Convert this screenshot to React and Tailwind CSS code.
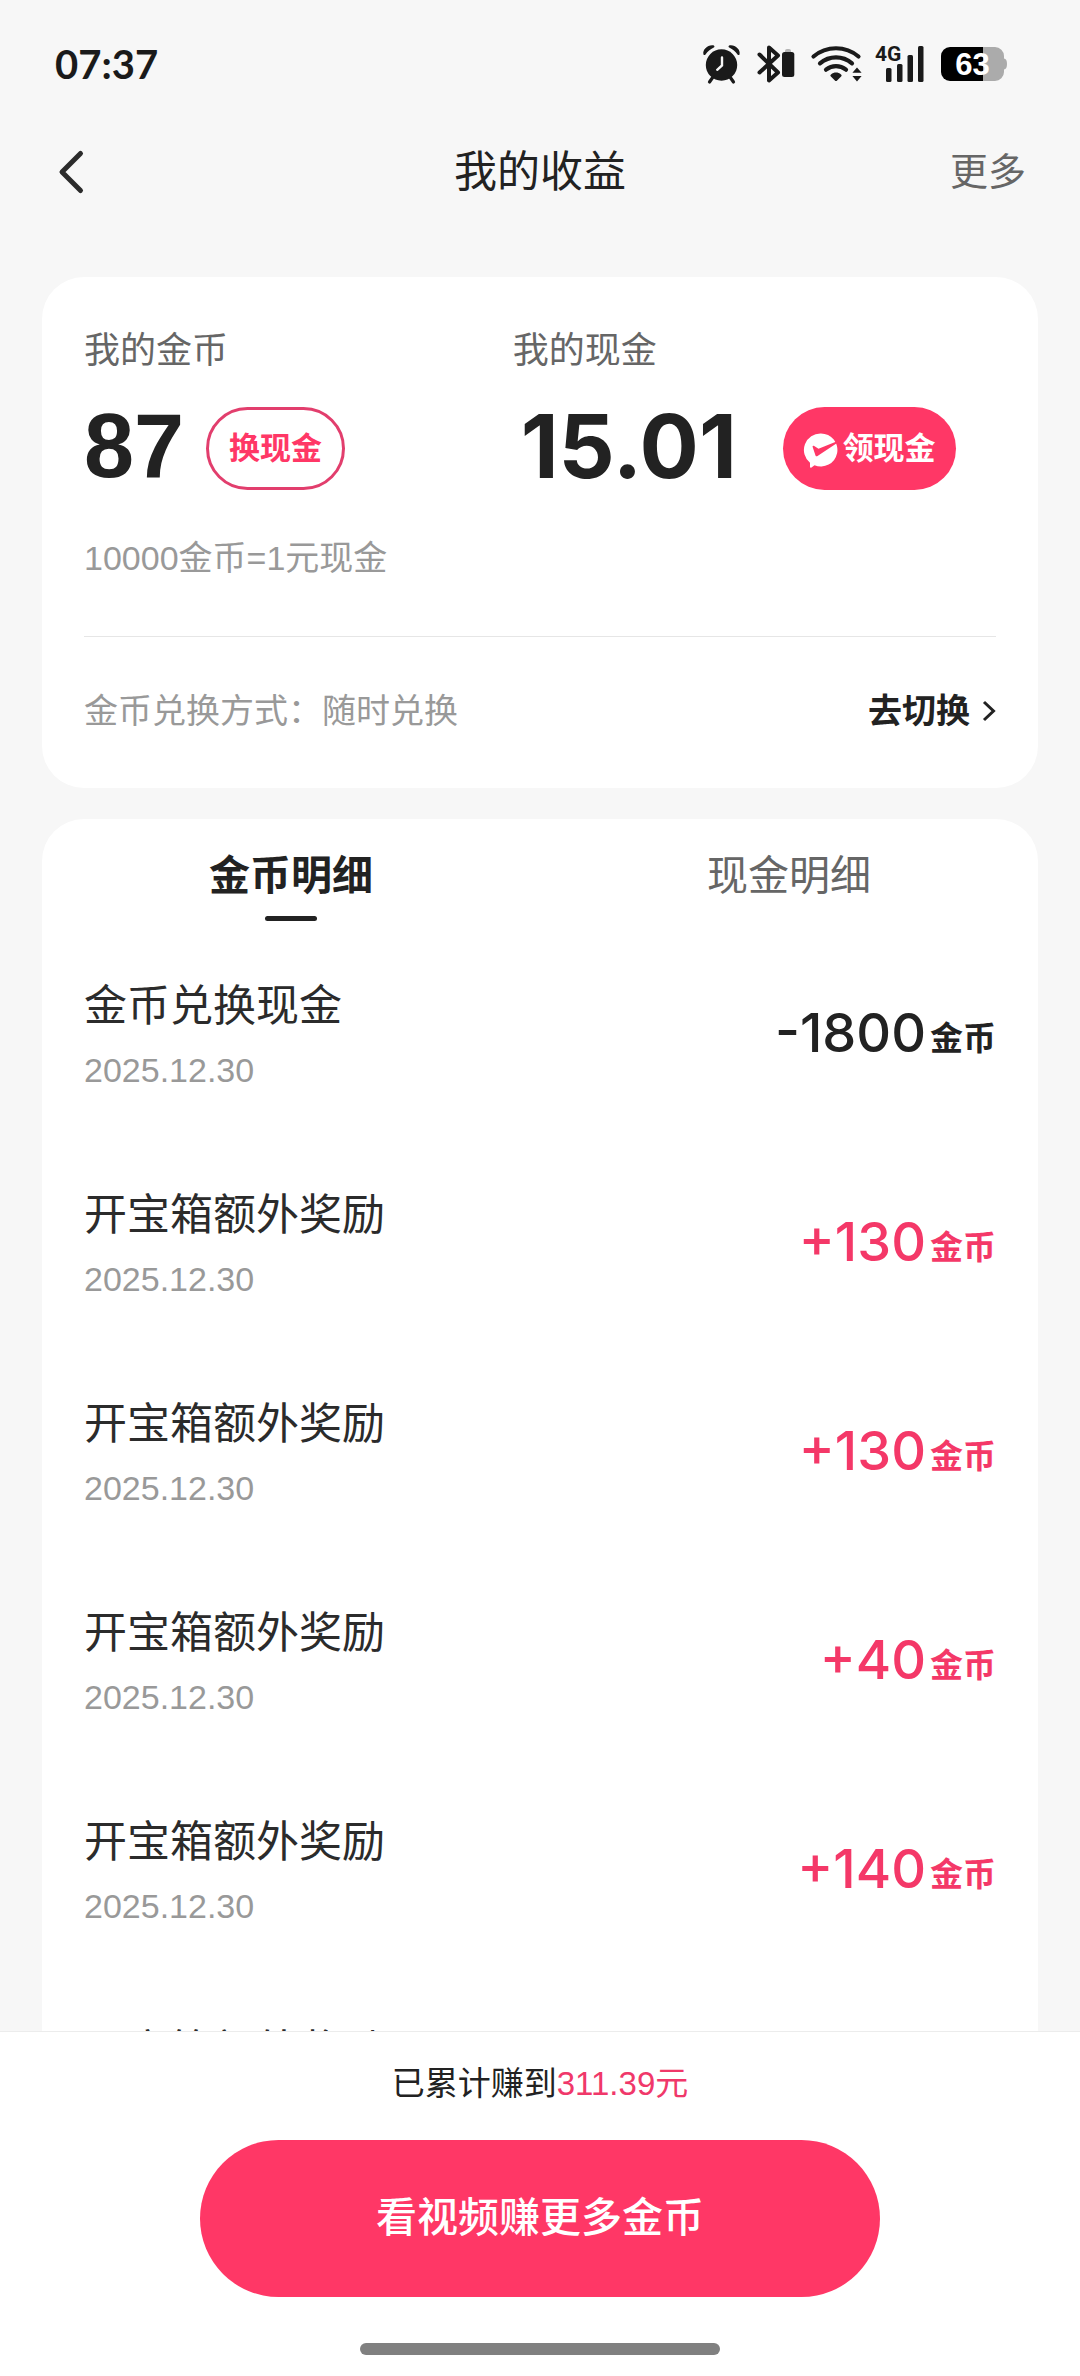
import { useState } from 'react';

const records = [
  { id: 1, title: '金币兑换现金', date: '2025.12.30', amount: -1800 },
  { id: 2, title: '开宝箱额外奖励', date: '2025.12.30', amount: 130 },
  { id: 3, title: '开宝箱额外奖励', date: '2025.12.30', amount: 130 },
  { id: 4, title: '开宝箱额外奖励', date: '2025.12.30', amount: 40 },
  { id: 5, title: '开宝箱额外奖励', date: '2025.12.30', amount: 140 },
  { id: 6, title: '开宝箱额外奖励', date: '2025.12.30', amount: 130 },
];

const tabs = [
  { key: 'coin', label: '金币明细' },
  { key: 'cash', label: '现金明细' },
];

const StatusBar = () => (
  <div className="flex h-32 shrink-0 items-center justify-between pl-[55px] pr-[72px] text-[#1a1a1a]">
    <span className="font-['Lato'] text-[40px] font-bold leading-none">07:37</span>
    <div className="flex items-center">
      <svg className="h-12 w-[222px]" viewBox="702 40 222 48" fill="none">
        {/* alarm */}
        <circle cx="721.5" cy="65" r="15.7" fill="#1a1a1a" />
        <path d="M713 77l-3.500 5M730 77l3.500 5" stroke="#1a1a1a" strokeWidth="3.200" strokeLinecap="round" />
        <path d="M703.500 54.500c-1.500-5 4.500-10 9.500-9.300 1.500.3 2 1.500.8 2.300-3.800 1.900-6 3.900-8.300 6.900-.6.900-1.700.900-2 .1zM739.500 54.500c1.500-5-4.500-10-9.500-9.300-1.500.3-2 1.500-.8 2.300 3.800 1.900 6 3.900 8.300 6.900.6.900 1.700.900 2 .1z" fill="#1a1a1a" />
        <path d="M722 57.500v8l-4.800 4.300" stroke="#f7f7f7" strokeWidth="2.400" strokeLinecap="round" />
        {/* bluetooth with device battery */}
        <path d="M759.500 54.500l18.500 18-9 8V47.500l9 8-18.500 17" stroke="#1a1a1a" strokeWidth="4" strokeLinejoin="round" strokeLinecap="round" />
        <rect x="785" y="49" width="6" height="5" rx="2" fill="#b5b5b5" />
        <rect x="782" y="52" width="12.300" height="25" rx="2.500" fill="#1a1a1a" />
        {/* wifi */}
        <path d="M813.500 56.500c13-11 32-11 45 0M820 63.300c9.500-8 22.500-8 32 0M826 69.700c6-4.800 14-4.800 20 0" stroke="#1a1a1a" strokeWidth="4.200" strokeLinecap="round" />
        <path d="M831 74.500c3-2.600 7-2.600 10 0 .8.700.8 1.300.1 2l-4 4c-.7.700-1.500.700-2.200 0l-4-4c-.7-.7-.7-1.300.1-2z" fill="#1a1a1a" />
        <path d="M857 67.500l4.600 5.200h-9.200zM857 81.500l4.600-5.400h-9.200z" fill="#1a1a1a" />
        {/* signal */}
        <text x="875" y="61" fill="#1a1a1a" className="font-['Roboto'] text-[21px] font-bold">4G</text>
        <rect x="886" y="68" width="5.500" height="14" rx="1.500" fill="#1a1a1a" />
        <rect x="897" y="64" width="5.500" height="18" rx="1.500" fill="#1a1a1a" />
        <rect x="907.500" y="55" width="5.500" height="27" rx="1.500" fill="#1a1a1a" />
        <rect x="918" y="46" width="5.500" height="36" rx="1.500" fill="#1a1a1a" />
      </svg>
      <svg className="ml-4 h-12 w-[68px]" viewBox="940 41 68 48">
        <path d="M983 48h12a9 9 0 0 1 9 9v2.500c2 .4 3 2 3 5.500s-1 5.100-3 5.500V73a9 9 0 0 1-9 9h-12z" fill="#ababab" />
        <path d="M950 48h33v34h-33a9 9 0 0 1-9-9V57a9 9 0 0 1 9-9z" fill="#000" />
        <text x="972.500" y="76" textAnchor="middle" fill="#fff" className="font-['Liberation_Sans'] text-[31px] font-bold">63</text>
      </svg>
    </div>
  </div>
);

const NavBar = () => (
  <header className="grid h-[88px] shrink-0 grid-cols-3 items-center px-[54px] text-[#222]">
    <button type="button" aria-label="返回" className="justify-self-start">
      <svg className="h-12 w-8" viewBox="0 0 32 48" fill="none">
        <path d="M26.500 5.500L8 24l18.500 18.500" stroke="#2b2b2b" strokeWidth="5" strokeLinecap="round" strokeLinejoin="round" />
      </svg>
    </button>
    <h1 className="justify-self-center text-[43px] leading-[56px]">我的收益</h1>
    <button type="button" className="justify-self-end text-[38px] leading-[56px] text-[#666]">更多</button>
  </header>
);

const BalanceCard = () => (
  <section className="mx-[42px] mt-[61px] shrink-0 rounded-[42px] bg-white px-[42px] pt-[47px]">
    <div className="flex">
      <div className="w-[47%]">
        <p className="text-[36px] leading-[54px] text-[#666]">我的金币</p>
        <div className="mt-[29px] flex h-[83px] items-center gap-[22px]">
          <span className="pb-1 font-['Liberation_Sans'] text-[90px] font-bold leading-[83px]">87</span>
          <button type="button" className="h-[83px] rounded-full border-3 border-[#e23e6d] px-5 pt-0.5 text-[31px] font-bold text-[#ff3766]">
            换现金
          </button>
        </div>
      </div>
      <div>
        <p className="text-[36px] leading-[54px] text-[#666]">我的现金</p>
        <div className="mt-[29px] flex h-[83px] items-center gap-[22px] pl-2">
          <span className="min-w-60 pb-1 font-['Inter'] text-[88px] font-bold leading-[83px]">15.01</span>
          <button type="button" className="flex h-[83px] items-center gap-1 rounded-full bg-[#ff3766] px-5 pt-0.5 text-[31px] font-bold text-white">
            <svg className="h-9 w-9" viewBox="0 0 36 36">
              <path d="M18 1.500a16.500 16.500 0 1 1-6.500 31.700L8.500 35.500c-.8.500-1.500.2-1.500-.7v-4A16.500 16.500 0 0 1 18 1.500z" fill="#fff" />
              <path d="M9.500 14.500c.4-.7 1-.8 1.700-.4l4.300 2.700L33.500 9.500c.8-.3 1.500.7 1 1.200L14.500 24c-.9.500-1.600.3-2-.6z" fill="#ff3766" />
            </svg>
            领现金
          </button>
        </div>
      </div>
    </div>
    <p className="mt-[43px] text-[34px] leading-[50px] text-[#999]">10000金币=1元现金</p>
    <div className="mt-[53px] flex h-[152px] items-center justify-between border-t border-[#e6e6e6] pb-1 text-[34px] leading-[50px]">
      <span className="text-[#999]">金币兑换方式：随时兑换</span>
      <button type="button" className="flex items-center gap-3 font-bold">
        去切换
        <svg className="h-6 w-[14px]" viewBox="0 0 14 24" fill="none">
          <path d="M2 3l9.500 9L2 21" stroke="#222" strokeWidth="3" />
        </svg>
      </button>
    </div>
  </section>
);

const RecordItem = ({ record }) => {
  const isIncome = record.amount > 0;

  return (
    <li className="flex h-[209px] shrink-0 items-center justify-between">
      <div>
        <p className="text-[43px] leading-[56px] text-[#2b2b2b]">{record.title}</p>
        <p className="mt-[14px] text-[34px] leading-[44px] text-[#999]">{record.date}</p>
      </div>
      <p className={`flex items-end gap-1 pb-1 ${isIncome ? 'text-[#f43868]' : 'text-[#222]'}`}>
        <span className="font-['Inter'] text-[54px] font-medium leading-[70px]">
          {isIncome ? `+${record.amount}` : record.amount}
        </span>
        <span className="text-[33px] font-bold leading-[58px]">金币</span>
      </p>
    </li>
  );
};

const RecordCard = () => {
  const [active, setActive] = useState('coin');

  return (
    <section className="mx-[42px] mt-[31px] flex min-h-0 flex-1 flex-col overflow-hidden rounded-t-[42px] bg-white">
      <div className="grid shrink-0 grid-cols-2 pt-[29px]" role="tablist">
        {tabs.map((tab) => (
          <button
            key={tab.key}
            type="button"
            role="tab"
            aria-selected={active === tab.key}
            onClick={() => setActive(tab.key)}
            className="flex flex-col items-center"
          >
            <span className={`text-[41px] leading-[56px] ${active === tab.key ? 'font-bold text-[#222]' : 'text-[#666]'}`}>
              {tab.label}
            </span>
            {active === tab.key && <span className="mt-3 h-[5px] w-[52px] rounded-full bg-[#222]" />}
          </button>
        ))}
      </div>
      <ul className="mt-[9px] flex min-h-0 flex-1 flex-col overflow-hidden px-[42px]">
        {records.map((record) => (
          <RecordItem key={record.id} record={record} />
        ))}
      </ul>
    </section>
  );
};

const BottomBar = () => (
  <footer className="flex shrink-0 flex-col items-center border-t border-[#ececec] bg-white pb-[21px] pt-[27px]">
    <p className="text-[33px] leading-[50px]">
      已累计赚到<span className="text-[#f0386a]">311.39元</span>
    </p>
    <button type="button" className="mt-[31px] h-[157px] w-[63%] rounded-full bg-[#ff3766] text-[41px] font-medium text-white">
      看视频赚更多金币
    </button>
    <div className="mt-[46px] h-3 w-1/3 rounded-full bg-[#808080]" />
  </footer>
);

export default function App() {
  return (
    <div className="flex h-screen flex-col bg-[#f7f7f7] font-['Liberation_Sans','Noto_Sans_CJK_SC',sans-serif] text-[#222]">
      <StatusBar />
      <NavBar />
      <BalanceCard />
      <RecordCard />
      <BottomBar />
    </div>
  );
}
